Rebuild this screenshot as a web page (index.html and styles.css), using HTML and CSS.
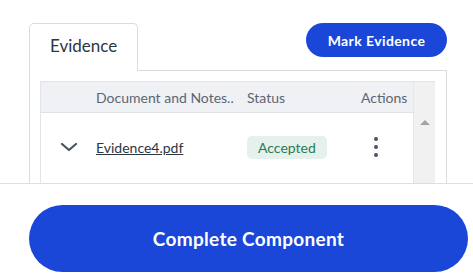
FILE: index.html
```html
<!DOCTYPE html>
<html lang="en">

<head>
  <meta charset="UTF-8">
  <meta name="viewport" content="width=device-width, initial-scale=1.0">
  <title>Evidence</title>
  <link rel="stylesheet" href="styles.css">
</head>

<body>
  <div class="main">
    <div class="top-row">
      <div class="tab">Evidence</div>
      <button class="btn-mark">Mark Evidence</button>
    </div>

    <div class="panel">
      <div class="table-wrap">
        <div class="table">
          <div class="thead">
            <div class="col-toggle"></div>
            <div class="col-doc">Document and Notes..</div>
            <div class="col-status">Status</div>
            <div class="col-actions">Actions</div>
          </div>
          <div class="row">
            <div class="col-toggle">
              <svg width="18" height="10" viewBox="0 0 18 10">
                <path d="M2 2 L9 8 L16 2" fill="none" stroke="#4a5260" stroke-width="2.2" stroke-linecap="round" stroke-linejoin="round"/>
              </svg>
            </div>
            <div class="col-doc"><a href="#" class="file-link">Evidence4.pdf</a></div>
            <div class="col-status"><span class="badge">Accepted</span></div>
            <div class="col-actions">
              <span class="kebab"><i></i><i></i><i></i></span>
            </div>
          </div>
        </div>
        <div class="scrollbar">
          <span class="arrow-up"></span>
        </div>
      </div>
    </div>
  </div>

  <!-- footer sits over the panel -->
  <div class="footer">
    <button class="btn-complete">Complete Component</button>
  </div>
</body>

</html>
```

FILE: styles.css
```css
body {
  margin: 0;
  width: 473px;
  height: 278px;
  overflow: hidden;
  background: #fff;
  font-family: Lato, "Open Sans", sans-serif;
  color: #2b3645;
}

.main {
  padding: 23px 26px 0 29px;
}

.top-row {
  display: flex;
  justify-content: space-between;
  align-items: flex-start;
}

.tab {
  width: 109px;
  height: 48px;
  box-sizing: border-box;
  border: 1px solid #d9dce0;
  border-bottom: none;
  border-radius: 5px 5px 0 0;
  background: #fff;
  padding: 11px 0 0 20px;
  font-size: 17px;
  color: #2b3645;
  position: relative;
  z-index: 1;
  margin-bottom: -1px;
}

.btn-mark {
  background: #1a47d8;
  color: #fff;
  border: none;
  border-radius: 17px;
  width: 141px;
  height: 34px;
  font-family: Lato, sans-serif;
  font-size: 14px;
  font-weight: 700;
  letter-spacing: 0.4px;
  cursor: pointer;
}

.panel {
  border: 1px solid #d9dce0;
  padding: 10px 11px 0 10px;
  height: 140px;
}

.table-wrap {
  display: flex;
  border: 1px solid #e1e4e8;
  border-right: none;
  height: 140px;
}

.table {
  flex: 1;
}

.thead,
.row {
  display: flex;
  align-items: center;
}

.thead {
  height: 30px;
  background: #eff1f4;
  border-bottom: 1px solid #dfe2e6;
  font-size: 14px;
  color: #5d6573;
}

.row {
  height: 68px;
  font-size: 14px;
}

.col-toggle {
  width: 55px;
  display: flex;
  box-sizing: border-box;
}

.row .col-toggle {
  padding-left: 19px;
}

.col-doc {
  width: 151px;
}

.col-status {
  width: 114px;
}

.col-actions {
  flex: 1;
  display: flex;
  align-items: center;
}

.file-link {
  color: #2b3645;
  text-decoration: underline;
  font-size: 14px;
}

.badge {
  display: inline-block;
  background: #e4f1ec;
  color: #2f7a55;
  border-radius: 5px;
  padding: 3px 11px;
  font-size: 14px;
}

.kebab {
  display: flex;
  flex-direction: column;
  gap: 4px;
  margin-left: 13px;
}

.kebab i {
  width: 4px;
  height: 4px;
  border-radius: 50%;
  background: #4a5260;
}

.scrollbar {
  width: 21px;
  background: #f1f1f1;
  border-left: 1px solid #e6e6e6;
  display: flex;
  justify-content: center;
}

.arrow-up {
  width: 0;
  height: 0;
  margin-top: 38px;
  border-left: 5px solid transparent;
  border-right: 5px solid transparent;
  border-bottom: 5px solid #a3a3a3;
}

.footer {
  position: fixed;
  left: 0;
  right: 0;
  bottom: 0;
  height: 95px;
  background: #fff;
  border-top: 1px solid #dcdfe3;
  padding: 21px 0 0 29px;
  box-sizing: border-box;
}

.btn-complete {
  width: 439px;
  height: 67px;
  border: none;
  border-radius: 34px;
  background: #1a47d8;
  color: #fff;
  font-family: Lato, sans-serif;
  font-size: 19px;
  font-weight: 700;
  letter-spacing: 0.3px;
  cursor: pointer;
}
```
